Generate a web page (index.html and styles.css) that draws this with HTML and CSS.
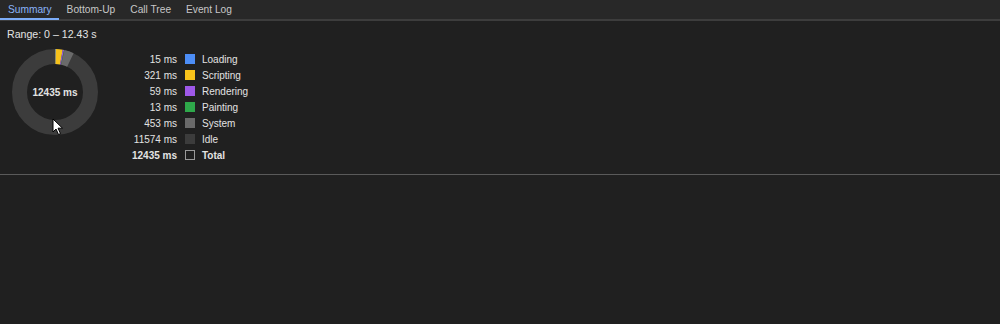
FILE: index.html
```html
<!DOCTYPE html>
<html>
<head>
<meta charset="utf-8">
<link rel="stylesheet" href="styles.css">
</head>
<body>
<div class="panel">
  <div class="tabs">
    <div class="tab active">Summary</div>
    <div class="tab">Bottom-Up</div>
    <div class="tab">Call Tree</div>
    <div class="tab">Event Log</div>
  </div>
  <div class="summary">
    <div class="range">Range: 0 – 12.43 s</div>
    <div class="content">
      <div class="donut">
        <svg width="90" height="90" viewBox="0 0 90 90">
          <g transform="rotate(-90 45 45)" fill="none" stroke-width="15">
            <circle cx="45" cy="45" r="35.5" stroke="#3c3c3c"/>
            <circle cx="45" cy="45" r="35.5" stroke="#4c8df6" stroke-dasharray="0.6 223.05" stroke-dashoffset="0"/>
            <circle cx="45" cy="45" r="35.5" stroke="#f7c21b" stroke-dasharray="5.8 223.05" stroke-dashoffset="-0.6"/>
            <circle cx="45" cy="45" r="35.5" stroke="#9e58e8" stroke-dasharray="1.1 223.05" stroke-dashoffset="-6.4"/>
            <circle cx="45" cy="45" r="35.5" stroke="#2ea84a" stroke-dasharray="0.3 223.05" stroke-dashoffset="-7.5"/>
            <circle cx="45" cy="45" r="35.5" stroke="#6a6a6a" stroke-dasharray="8.1 223.05" stroke-dashoffset="-7.8"/>
          </g>
        </svg>
        <div class="donut-label">12435 ms</div>
      </div>
      <div class="legend">
        <div class="row"><span class="val">15 ms</span><span class="sw" style="background:#4c8df6"></span><span class="lbl">Loading</span></div>
        <div class="row"><span class="val">321 ms</span><span class="sw" style="background:#f7c21b"></span><span class="lbl">Scripting</span></div>
        <div class="row"><span class="val">59 ms</span><span class="sw" style="background:#9e58e8"></span><span class="lbl">Rendering</span></div>
        <div class="row"><span class="val">13 ms</span><span class="sw" style="background:#2ea84a"></span><span class="lbl">Painting</span></div>
        <div class="row"><span class="val">453 ms</span><span class="sw" style="background:#6a6a6a"></span><span class="lbl">System</span></div>
        <div class="row"><span class="val">11574 ms</span><span class="sw" style="background:#3c3c3c"></span><span class="lbl">Idle</span></div>
        <div class="row total"><span class="val">12435 ms</span><span class="sw empty"></span><span class="lbl">Total</span></div>
      </div>
    </div>
  </div>
  <div class="divider"></div>
  <svg class="cursor" width="14" height="18" viewBox="0 0 14 18">
    <path d="M1 1 L1 14 L4 11 L6.5 16.5 L8.5 15.6 L6 10.2 L10.5 10.2 Z" fill="#ffffff" stroke="#000000" stroke-width="1" stroke-linejoin="round"/>
  </svg>
</div>
</body>
</html>
```

FILE: styles.css
```css
html, body {
  margin: 0;
  padding: 0;
  background: #202020;
}
body {
  width: 1000px;
  height: 324px;
  overflow: hidden;
  font-family: "Liberation Sans", Arial, sans-serif;
  color: #e3e3e3;
}
.panel {
  position: relative;
  height: 324px;
}
.tabs {
  display: flex;
  height: 19px;
  background: #282828;
  border-bottom: 2px solid #3d3d3d;
}
.tab {
  padding: 0 7px 0 8px;
  font-size: 10.2px;
  line-height: 19px;
  color: #c7c7c7;
  position: relative;
}
.tab.active {
  color: #8ab4f8;
}
.tab.active::after {
  content: "";
  position: absolute;
  left: 0;
  right: 0;
  bottom: -1px;
  height: 2px;
  background: #7cacf8;
}
.summary {
  padding: 6px 0 0 7px;
  height: 144px;
}
.range {
  font-size: 10.6px;
  line-height: 14px;
  color: #e3e3e3;
}
.content {
  display: flex;
  margin-top: 6px;
}
.donut {
  position: relative;
  width: 90px;
  height: 90px;
  margin-left: 3px;
}
.donut svg {
  display: block;
}
.donut-label {
  position: absolute;
  inset: 0;
  display: flex;
  align-items: center;
  justify-content: center;
  font-size: 10px;
  font-weight: bold;
  color: #e3e3e3;
}
.legend {
  margin-left: 20px;
  margin-top: 4px;
  display: flex;
  flex-direction: column;
}
.row {
  display: flex;
  align-items: center;
  height: 16px;
  font-size: 10px;
}
.val {
  width: 57px;
  text-align: right;
  color: #e3e3e3;
}
.sw {
  width: 10px;
  height: 10px;
  margin-left: 8px;
  margin-right: 7px;
  box-sizing: border-box;
}
.sw.empty {
  border: 1px solid #9a9a9a;
  background: transparent;
}
.lbl {
  color: #e3e3e3;
}
.total .val, .total .lbl {
  font-weight: bold;
}
.divider {
  height: 1px;
  background: #5a5a5a;
  margin-top: 3px;
}
.cursor {
  position: absolute;
  left: 52px;
  top: 118px;
}
```
